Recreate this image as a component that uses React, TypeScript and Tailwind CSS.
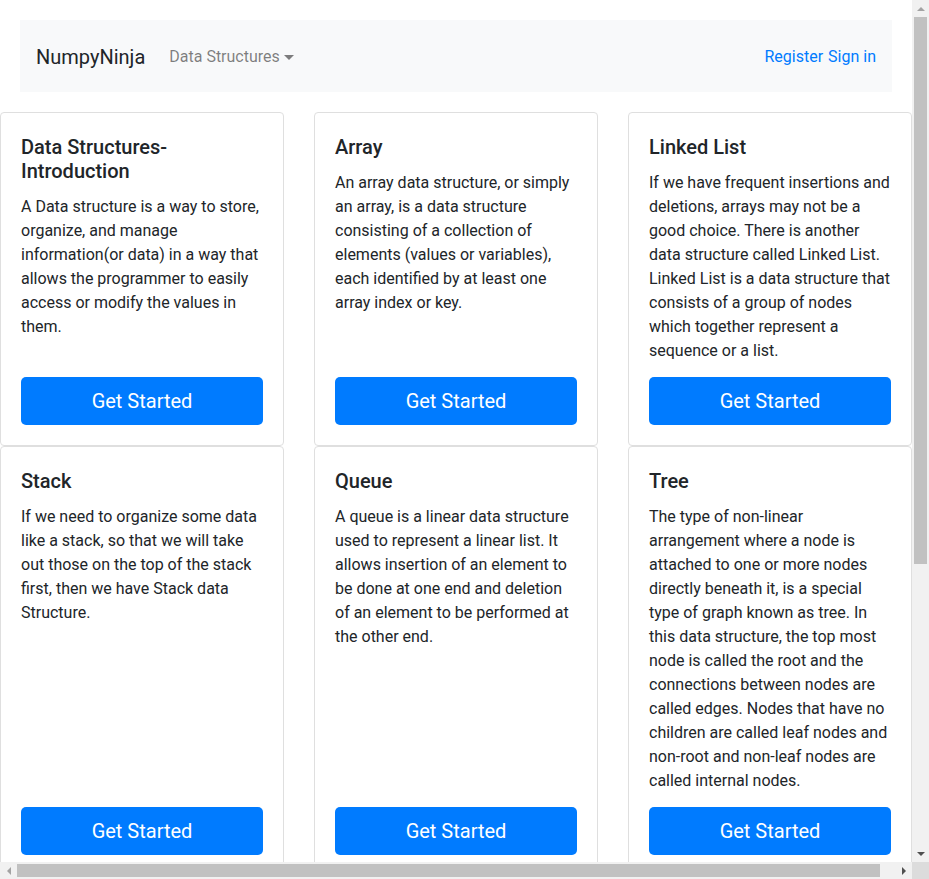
import React from "react";

type Topic = { title: string; text: string };

const TOPICS: Topic[] = [
  {
    title: "Data Structures-Introduction",
    text: "A Data structure is a way to store, organize, and manage information(or data) in a way that allows the programmer to easily access or modify the values in them.",
  },
  {
    title: "Array",
    text: "An array data structure, or simply an array, is a data structure consisting of a collection of elements (values or variables), each identified by at least one array index or key.",
  },
  {
    title: "Linked List",
    text: "If we have frequent insertions and deletions, arrays may not be a good choice. There is another data structure called Linked List. Linked List is a data structure that consists of a group of nodes which together represent a sequence or a list.",
  },
  {
    title: "Stack",
    text: "If we need to organize some data like a stack, so that we will take out those on the top of the stack first, then we have Stack data Structure.",
  },
  {
    title: "Queue",
    text: "A queue is a linear data structure used to represent a linear list. It allows insertion of an element to be done at one end and deletion of an element to be performed at the other end.",
  },
  {
    title: "Tree",
    text: "The type of non-linear arrangement where a node is attached to one or more nodes directly beneath it, is a special type of graph known as tree. In this data structure, the top most node is called the root and the connections between nodes are called edges. Nodes that have no children are called leaf nodes and non-root and non-leaf nodes are called internal nodes.",
  },
];

function TopicCard({ topic }: { topic: Topic }) {
  return (
    <div className="flex h-full flex-col rounded border border-[#dfdfdf] bg-white p-5">
      <h5 className="mb-3 translate-y-[2px] text-[20px] font-medium leading-[1.2] text-[#212529]">{topic.title}</h5>
      <p className="mb-4 translate-y-[2px] text-base leading-6">{topic.text}</p>
      <button className="mt-auto h-12 w-full rounded-[5px] bg-[#007bff] text-[20px] leading-[30px] text-white">
        Get Started
      </button>
    </div>
  );
}

// classic window scrollbars, as seen in the screenshot
function ArrowBox({ dir }: { dir: "up" | "down" | "left" | "right" }) {
  const tri = {
    up: "border-x-[4px] border-b-[4px] border-x-transparent border-b-[#a3a3a3]",
    down: "border-x-[4px] border-t-[4px] border-x-transparent border-t-[#505050]",
    left: "border-y-[4px] border-r-[4px] border-y-transparent border-r-[#a3a3a3]",
    right: "border-y-[4px] border-l-[4px] border-y-transparent border-l-[#505050]",
  }[dir];
  return (
    <div className="flex h-[17px] w-[17px] shrink-0 items-center justify-center bg-[#f1f1f1]">
      <span className={`h-0 w-0 ${tri}`} />
    </div>
  );
}

export default function App() {
  return (
    <div className="flex h-screen flex-col overflow-hidden bg-white font-['Roboto',sans-serif] text-base text-[#212529]">
      <div className="flex min-h-0 flex-1">
        {/* Page */}
        <div className="min-w-0 flex-1 overflow-hidden">
          <nav className="mx-5 mt-5 flex h-[72px] items-center bg-[#f8f9fa] px-4 pt-[2px]">
            <a className="mr-4 text-[20px] leading-[30px] text-[#212529]">NumpyNinja</a>
            <a className="flex items-center px-2 text-base text-black/50">
              Data Structures
              <span className="ml-[4px] inline-block h-0 w-0 border-x-[5px] border-t-[5px] border-x-transparent border-t-black/50" />
            </a>
            <div className="ml-auto flex gap-[5px] text-base text-[#007bff]">
              <a>Register</a>
              <a>Sign in</a>
            </div>
          </nav>

          <div className="-mx-[15px] mt-5 grid grid-cols-3">
            {TOPICS.map((t) => (
              <div key={t.title} className="px-[15px]">
                <TopicCard topic={t} />
              </div>
            ))}
          </div>
        </div>

        {/* Vertical scrollbar */}
        <div className="flex w-[17px] shrink-0 flex-col bg-[#f1f1f1]">
          <ArrowBox dir="up" />
          <div className="flex min-h-0 flex-1 flex-col">
            <div className="mx-[2px] h-[547px] bg-[#c1c1c1]" />
          </div>
          <ArrowBox dir="down" />
        </div>
      </div>

      {/* Horizontal scrollbar */}
      <div className="flex h-[17px] shrink-0 bg-[#f1f1f1]">
        <ArrowBox dir="left" />
        <div className="flex min-w-0 flex-1 items-center">
          <div className="h-[13px] w-[863px] bg-[#c1c1c1]" />
        </div>
        <ArrowBox dir="right" />
        <div className="h-[17px] w-[17px] shrink-0 bg-[#dcdcdc]" />
      </div>
    </div>
  );
}
